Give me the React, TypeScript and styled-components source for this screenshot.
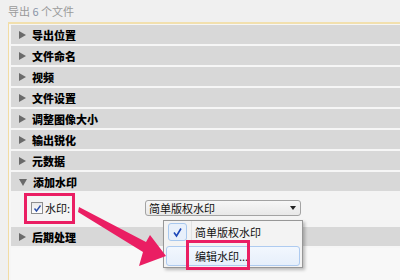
import React from "react";
import styled, { createGlobalStyle } from "styled-components";

const GlobalStyle = createGlobalStyle`
  html, body { margin: 0; padding: 0; background: #f0f0f0; }
  body { font-family: "Noto Sans CJK SC", "Liberation Sans", sans-serif; }
  * { box-sizing: border-box; }
`;

const Page = styled.div`
  position: relative;
  width: 400px;
  height: 280px;
  overflow: hidden;
  background: #f0f0f0;
`;

const Title = styled.div`
  height: 22px;
  padding-left: 8px;
  font-size: 11px;
  line-height: 22px;
  color: #9a9a9a;
  span { color: #8a96a8; }
`;

const Panel = styled.div`
  margin-left: 8px;
  height: 258px;
  border-top: 2px solid #f2e0ae;
  border-left: 1px solid #f2dca4;
  background: #f6f6f6;
  padding: 1px 0 0 2px;
  display: flex;
  flex-direction: column;
`;

const Row = styled.div<{ $last?: boolean }>`
  height: 19px;
  margin-bottom: ${(p) => (p.$last ? 0 : 2)}px;
  background: #d8d8d8;
  display: flex;
  align-items: center;
  padding-left: 8px;
  gap: 6px;
  font-size: 11px;
  font-weight: 900;
  color: #000;
`;

const Arrow = styled.span<{ $open?: boolean }>`
  width: 0;
  height: 0;
  ${(p) =>
    p.$open
      ? `border-left: 4px solid transparent; border-right: 4px solid transparent; border-top: 7px solid #6a6a6a; margin-top: 1px;`
      : `border-top: 4px solid transparent; border-bottom: 4px solid transparent; border-left: 7px solid #6a6a6a;`}
`;

const Content = styled.div`
  height: 36px;
  display: flex;
  align-items: center;
  padding-left: 20px;
  padding-bottom: 2px;
  background: #f4f4f4;
`;

const CheckLabel = styled.label`
  display: flex;
  align-items: center;
  gap: 2px;
  font-size: 11px;
  color: #111;
  width: 114px;
`;

const CheckBox = styled.span`
  width: 12px;
  height: 12px;
  border: 1px solid #8e8f8f;
  background: linear-gradient(#e9e9e9, #ffffff);
  display: flex;
  align-items: center;
  justify-content: center;
`;

const Select = styled.div`
  width: 156px;
  height: 16px;
  border: 1px solid #a3a3a3;
  border-radius: 3px;
  background: linear-gradient(#f7f7f7, #e8e8e8);
  display: flex;
  align-items: center;
  justify-content: space-between;
  padding: 0 4px 0 3px;
  font-size: 11px;
  color: #111;
`;

const Caret = styled.span`
  width: 0;
  height: 0;
  border-left: 3px solid transparent;
  border-right: 3px solid transparent;
  border-top: 4px solid #222;
`;

const Bottom = styled.div`
  flex: 1;
  background: #f8f8f8;
`;

const Menu = styled.div`
  position: absolute;
  left: 163px;
  top: 220px;
  width: 140px;
  height: 48px;
  border: 1px solid #979797;
  background: #f3f3f3;
  box-shadow: 2px 2px 3px rgba(0, 0, 0, 0.25);
  padding: 1px 2px;
  display: flex;
  flex-direction: column;
  gap: 4px;
`;

const MenuItem = styled.div<{ $hover?: boolean }>`
  height: 20px;
  display: flex;
  align-items: center;
  font-size: 11px;
  color: #111;
  border-radius: 3px;
  border: 1px solid ${(p) => (p.$hover ? "#aecbf0" : "transparent")};
  background: ${(p) => (p.$hover ? "linear-gradient(#f2f7fe, #e6effb)" : "transparent")};
  padding-left: 24px;
  position: relative;
`;

const Gutter = styled.span`
  position: absolute;
  left: 24px;
  top: -2px;
  bottom: -2px;
  border-left: 1px solid #e2e3e3;
`;

const MenuCheck = styled.span`
  position: absolute;
  left: 1px;
  top: 0px;
  width: 19px;
  height: 18px;
  border: 1px solid #a8c8ee;
  border-radius: 3px;
  background: #e8f0fb;
  display: flex;
  align-items: center;
  justify-content: center;
`;

const MenuText = styled.span`
  margin-left: 4px;
`;

const Highlight = styled.div<{ $l: number; $t: number; $w: number; $h: number }>`
  position: absolute;
  left: ${(p) => p.$l}px;
  top: ${(p) => p.$t}px;
  width: ${(p) => p.$w}px;
  height: ${(p) => p.$h}px;
  border: 3px solid #ea1e63;
  pointer-events: none;
`;

const Overlay = styled.svg`
  position: absolute;
  left: 0;
  top: 0;
  pointer-events: none;
`;

const rows = ["导出位置", "文件命名", "视频", "文件设置", "调整图像大小", "输出锐化", "元数据"];

export default function App() {
  return (
    <>
      <GlobalStyle />
      <Page>
        <Title>
          导出 <span>6</span> 个文件
        </Title>
        <Panel>
          {rows.map((r) => (
            <Row key={r}>
              <Arrow />
              {r}
            </Row>
          ))}
          <Row $last>
            <Arrow $open />
            添加水印
          </Row>
          <Content>
            <CheckLabel>
              <CheckBox>
                <svg width="9" height="9" viewBox="0 0 9 9">
                  <path d="M1.5 4.5 L3.5 7 L7.5 1.5" fill="none" stroke="#2b4fa8" strokeWidth="1.4" />
                </svg>
              </CheckBox>
              水印:
            </CheckLabel>
            <Select>
              简单版权水印
              <Caret />
            </Select>
          </Content>
          <Row>
            <Arrow />
            后期处理
          </Row>
          <Bottom />
        </Panel>
        <Menu>
          <MenuItem>
            <Gutter />
            <MenuCheck>
              <svg width="11" height="11" viewBox="0 0 11 11">
                <path d="M2 5.5 L4.5 9 L9 1.5" fill="none" stroke="#1d47b8" strokeWidth="1.6" />
              </svg>
            </MenuCheck>
            <MenuText>简单版权水印</MenuText>
          </MenuItem>
          <MenuItem $hover>
            <MenuText>编辑水印...</MenuText>
          </MenuItem>
        </Menu>
        <Highlight $l={24} $t={193} $w={51} $h={31} />
        <Highlight $l={186} $t={240} $w={64} $h={30} />
        <Overlay width="400" height="280" viewBox="0 0 400 280">
          <polygon
            points="79,207 146,242 150,235 166,256 139,266 143,252 78,212"
            fill="#ea1e63"
          />
        </Overlay>
      </Page>
    </>
  );
}
